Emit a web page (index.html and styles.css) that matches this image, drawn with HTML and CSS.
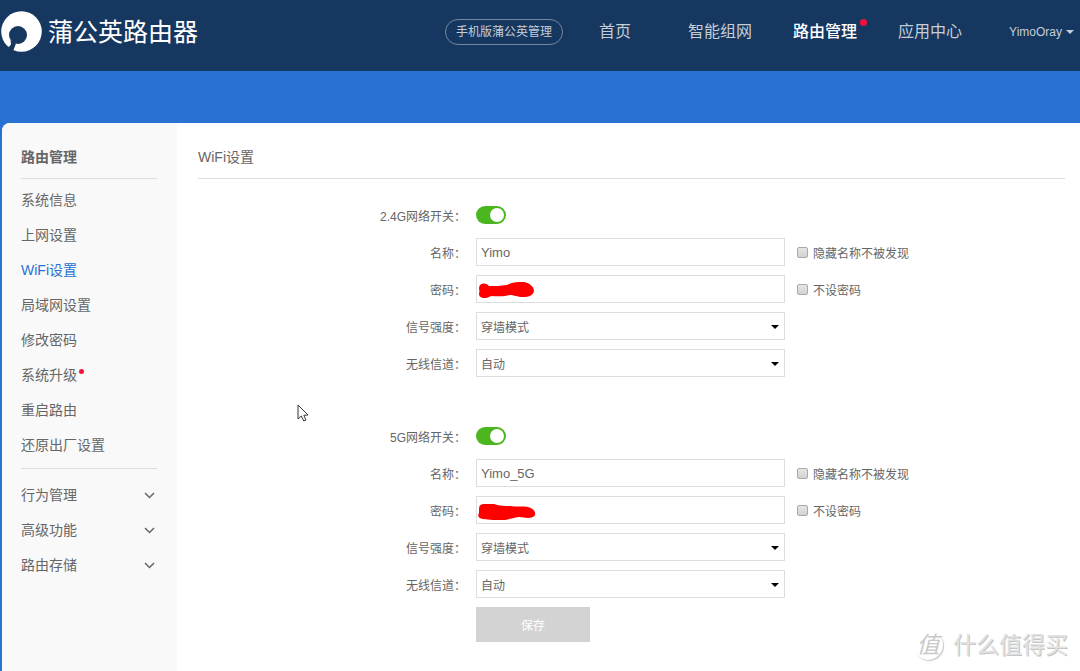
FILE: index.html
```html
<!DOCTYPE html>
<html lang="zh-CN">
<head>
<meta charset="utf-8">
<meta name="viewport" content="width=device-width, initial-scale=1">
<title>蒲公英路由器</title>
<link rel="stylesheet" href="styles.css">
</head>
<body>
<header class="topbar">
  <a class="brand" href="#">
    <svg class="brand-mark" viewBox="0 0 41 41" aria-hidden="true">
      <circle cx="20.500" cy="20.500" r="20.300" fill="#fff"/>
      <circle cx="17" cy="24" r="9" fill="#16375f"/>
      <path d="M9.500 29 L15 32.500 L12.500 39 L11 42 L6 38 L10 33.500 Z" fill="#16375f"/>
    </svg>
    <span>蒲公英路由器</span>
  </a>
  <nav class="nav">
    <a class="pill" href="#">手机版蒲公英管理</a>
    <a class="nav-link nav-home" href="#">首页</a>
    <a class="nav-link" href="#">智能组网</a>
    <a class="nav-link active dotted" href="#">路由管理</a>
    <a class="nav-link" href="#">应用中心</a>
    <button class="user" type="button">YimoOray<span class="caret"></span></button>
  </nav>
</header>

<div class="card">
  <aside class="sidebar">
    <h2 class="side-title">路由管理</h2>
    <ul class="menu">
      <li><a href="#">系统信息</a></li>
      <li><a href="#">上网设置</a></li>
      <li><a class="current" href="#">WiFi设置</a></li>
      <li><a href="#">局域网设置</a></li>
      <li><a href="#">修改密码</a></li>
      <li><a class="dotted" href="#">系统升级</a></li>
      <li><a href="#">重启路由</a></li>
      <li><a href="#">还原出厂设置</a></li>
    </ul>
    <ul class="menu groups">
      <li><button type="button">行为管理<svg class="chevron" viewBox="0 0 11 7" aria-hidden="true"><path d="M1 1 L5.500 5.500 L10 1"/></svg></button></li>
      <li><button type="button">高级功能<svg class="chevron" viewBox="0 0 11 7" aria-hidden="true"><path d="M1 1 L5.500 5.500 L10 1"/></svg></button></li>
      <li><button type="button">路由存储<svg class="chevron" viewBox="0 0 11 7" aria-hidden="true"><path d="M1 1 L5.500 5.500 L10 1"/></svg></button></li>
    </ul>
  </aside>

  <main class="content">
    <h1 class="page-title">WiFi设置</h1>
    <form class="wifi">
      <section class="band">
        <div class="row">
          <label class="name" for="on24">2.4G网络开关：</label>
          <input class="switch" id="on24" type="checkbox" role="switch" checked>
        </div>
        <div class="row">
          <label class="name" for="ssid24">名称：</label>
          <input class="field" id="ssid24" type="text" value="Yimo">
          <label class="check"><input type="checkbox">隐藏名称不被发现</label>
        </div>
        <div class="row">
          <label class="name" for="pw24">密码：</label>
          <div class="masked">
            <input class="field" id="pw24" type="text">
            <svg class="scribble" viewBox="0 0 60 22" aria-hidden="true"><path d="M3 10 C3 4 9 3 13 7 C20 7 24 7 31 6 C36 3 42 3 48 3 C54 4 58 8 58 12 C57 17 52 18 47 18 C41 18 38 16 34 16 C27 18 21 17 15 17 C11 20 3 20 3 15 C3 13 4 13 3 10 Z"/></svg>
          </div>
          <label class="check"><input type="checkbox">不设密码</label>
        </div>
        <div class="row">
          <label class="name" for="power24">信号强度：</label>
          <div class="drop"><select class="field" id="power24"><option>穿墙模式</option></select></div>
        </div>
        <div class="row">
          <label class="name" for="ch24">无线信道：</label>
          <div class="drop"><select class="field" id="ch24"><option>自动</option></select></div>
        </div>
      </section>

      <section class="band">
        <div class="row">
          <label class="name" for="on5">5G网络开关：</label>
          <input class="switch" id="on5" type="checkbox" role="switch" checked>
        </div>
        <div class="row">
          <label class="name" for="ssid5">名称：</label>
          <input class="field" id="ssid5" type="text" value="Yimo_5G">
          <label class="check"><input type="checkbox">隐藏名称不被发现</label>
        </div>
        <div class="row">
          <label class="name" for="pw5">密码：</label>
          <div class="masked">
            <input class="field" id="pw5" type="text">
            <svg class="scribble" viewBox="0 0 60 22" aria-hidden="true"><path d="M3 9 C3 5 5 4 9 4 L18 4 C24 6 29 6 34 6 C41 7 47 6 52 7 C57 8 60 12 59 15 C57 19 50 18 43 17 C37 18 34 19 29 20 C20 20 13 20 7 19 C1 18 2 15 3 13 Z"/></svg>
          </div>
          <label class="check"><input type="checkbox">不设密码</label>
        </div>
        <div class="row">
          <label class="name" for="power5">信号强度：</label>
          <div class="drop"><select class="field" id="power5"><option>穿墙模式</option></select></div>
        </div>
        <div class="row">
          <label class="name" for="ch5">无线信道：</label>
          <div class="drop"><select class="field" id="ch5"><option>自动</option></select></div>
        </div>
        <div class="row">
          <button class="save" type="button">保存</button>
        </div>
      </section>
    </form>
  </main>
</div>

<svg class="pointer" viewBox="0 0 12 18" aria-hidden="true"><path d="M1 1 L1 15 L4.300 12 L6.800 17 L9 16 L6.800 11.300 L11 11 Z"/></svg>
<div class="watermark"><span class="seal">值</span><span>什么值得买</span></div>
</body>
</html>
```

FILE: styles.css
```css
* {
  box-sizing: border-box;
}

body {
  display: flex;
  flex-direction: column;
  min-height: 100vh;
  margin: 0;
  position: relative;
  background: #2a72d1;
  color: #666;
  font-family: "Liberation Sans", "Noto Sans CJK SC", sans-serif;
  font-size: 12px;
}

a {
  color: inherit;
  text-decoration: none;
}

button,
input,
select {
  font: inherit;
  color: inherit;
}

.topbar {
  display: flex;
  align-items: center;
  justify-content: space-between;
  height: 71px;
  padding: 0 6px 8px 1px;
  background: #16375f;
}

.brand {
  display: flex;
  align-items: center;
  gap: 6px;
  color: #fff;
  font-size: 25px;
  line-height: 40px;
}

.brand-mark {
  width: 41px;
  height: 41px;
}

.nav {
  display: flex;
  align-items: center;
  color: #c5cdd7;
  line-height: 24px;
}

.pill {
  width: 118px;
  margin-right: 36px;
  border: 1px solid #74849b;
  border-radius: 13px;
  text-align: center;
}

.nav-link {
  margin-right: 41px;
  font-size: 16px;
}

.nav-home {
  margin-right: 57px;
}

.nav-link:last-of-type {
  margin-right: 47px;
}

.active {
  color: #fff;
  font-weight: 500;
}

.dotted {
  position: relative;
}

.dotted::after {
  content: "";
  position: absolute;
  top: 11px;
  right: -7px;
  width: 5px;
  height: 5px;
  border-radius: 50%;
  background: #f5103c;
}

.active.dotted::after {
  top: -1px;
  right: -10px;
  width: 7px;
  height: 7px;
}

.user {
  display: flex;
  align-items: center;
  gap: 4px;
  padding: 0;
  border: 0;
  background: none;
  font-size: 12px;
}

.caret {
  border: 4px solid transparent;
  border-top-color: currentColor;
  border-bottom: 0;
}

.card {
  display: flex;
  flex: 1;
  margin: 52px 0 0 2px;
  overflow: hidden;
  border-radius: 8px 0 0 0;
  background: #fff;
}

.sidebar {
  flex: none;
  width: 175px;
  padding: 0 20px 0 19px;
  background: #f9f9f9;
  font-size: 14px;
}

.side-title,
.page-title {
  height: 56px;
  margin: 0;
  padding-top: 12px;
  border-bottom: 1px solid #ddd;
  font-size: 14px;
  font-weight: 400;
  line-height: 44px;
}

.side-title {
  font-weight: 700;
}

.menu {
  margin: 0;
  padding: 4px 0 5px;
  list-style: none;
  line-height: 35px;
}

.menu a {
  display: inline-block;
}

.current {
  color: #2a72d1;
}

.groups {
  padding: 9px 0;
  border-top: 1px solid #ddd;
}

.groups button {
  display: flex;
  align-items: center;
  justify-content: space-between;
  width: 100%;
  height: 35px;
  padding: 0 2px 0 0;
  border: 0;
  background: none;
}

.chevron {
  width: 11px;
  height: 7px;
  fill: none;
  stroke: #666;
  stroke-width: 1.5;
}

.content {
  flex: 1;
  min-width: 0;
  padding: 0 15px 28px 21px;
}

.wifi {
  display: flex;
  flex-direction: column;
  gap: 45px;
  padding-top: 22px;
}

.band {
  display: flex;
  flex-direction: column;
  gap: 9px;
}

.row {
  display: grid;
  grid-template-columns: minmax(0, 268px) minmax(0, 309px) auto;
  column-gap: 10px;
  align-items: center;
  justify-content: start;
  min-height: 28px;
}

.name {
  text-align: right;
  white-space: nowrap;
}

.field {
  display: block;
  width: 100%;
  height: 28px;
  padding: 0 4px;
  border: 1px solid #ddd;
  border-radius: 0;
  background: #fff;
}

input.field {
  font-size: 13px;
}

.drop,
.masked {
  position: relative;
}

.drop .field {
  appearance: none;
  padding-top: 3px;
}

.drop::after {
  content: "";
  position: absolute;
  top: 13px;
  right: 6px;
  border: 4px solid transparent;
  border-top-color: #000;
  border-bottom: 0;
  pointer-events: none;
}

.scribble {
  position: absolute;
  top: 4px;
  left: 0;
  width: 60px;
  height: 22px;
  fill: #f00;
}

.switch {
  display: flex;
  align-items: center;
  justify-content: flex-end;
  appearance: none;
  width: 30px;
  height: 18px;
  margin: 0;
  padding: 0 2px;
  border-radius: 9px;
  background: #4cb61f;
}

.switch::after {
  content: "";
  width: 14px;
  height: 14px;
  border-radius: 50%;
  background: #fff;
}

.check {
  display: flex;
  align-items: center;
  gap: 5px;
  padding-left: 2px;
  white-space: nowrap;
}

.check input {
  appearance: none;
  width: 11px;
  height: 11px;
  margin: 0;
  border: 1px solid #aaa;
  border-radius: 2px;
  background: linear-gradient(#e6e6e6, #d2d2d2);
}

.save {
  grid-column: 2;
  width: 114px;
  height: 35px;
  border: 0;
  background: #d3d3d3;
  color: #fff;
}

.pointer {
  position: absolute;
  top: 404px;
  left: 297px;
  width: 12px;
  height: 18px;
  fill: #fff;
  stroke: #334;
}

.watermark {
  display: flex;
  align-items: center;
  gap: 10px;
  position: absolute;
  right: 12px;
  bottom: 11px;
  color: #e2e2e2;
  font-size: 23px;
  line-height: 30px;
  text-shadow: 1px 1px 0 #c4c4c4;
}

.seal {
  width: 30px;
  height: 30px;
  border-radius: 50%;
  box-shadow: 1px 1px 1px #c4c4c4;
  color: #c8c8c8;
  font-style: italic;
  text-align: center;
  text-shadow: none;
}
```
